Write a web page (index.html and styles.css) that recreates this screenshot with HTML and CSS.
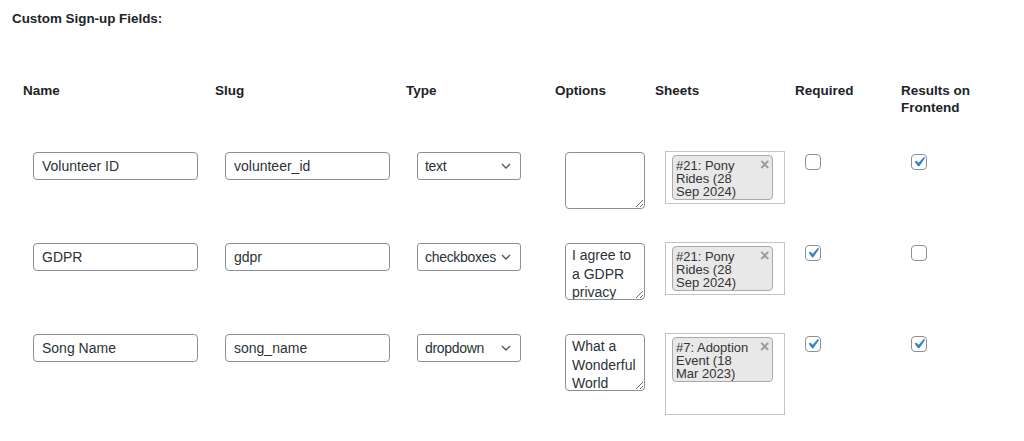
FILE: index.html
```html
<!DOCTYPE html>
<html lang="en">
<head>
<meta charset="utf-8">
<title>Custom Sign-up Fields</title>
<link rel="stylesheet" href="styles.css">
</head>
<body>
<h2 class="title">Custom Sign-up Fields:</h2>
<div class="fields">
  <div class="row head">
    <div>Name</div>
    <div>Slug</div>
    <div>Type</div>
    <div>Options</div>
    <div>Sheets</div>
    <div>Required</div>
    <div>Results on<br>Frontend</div>
  </div>

  <div class="row item">
    <div class="cell"><input class="txt" type="text" value="Volunteer ID"></div>
    <div class="cell"><input class="txt" type="text" value="volunteer_id"></div>
    <div class="cell"><select class="sel"><option>text</option></select></div>
    <div class="cell"><textarea class="opts"></textarea></div>
    <div class="cell">
      <div class="sheets">
        <div class="chip"><span class="chip-text">#21: Pony Rides (28 Sep 2024)</span><span class="chip-x">×</span></div>
      </div>
    </div>
    <div class="cell"><input class="cb" type="checkbox"></div>
    <div class="cell"><input class="cb" type="checkbox" checked></div>
  </div>

  <div class="row item">
    <div class="cell"><input class="txt" type="text" value="GDPR"></div>
    <div class="cell"><input class="txt" type="text" value="gdpr"></div>
    <div class="cell"><select class="sel"><option>checkboxes</option></select></div>
    <div class="cell"><textarea class="opts">I agree to a GDPR privacy policy</textarea></div>
    <div class="cell">
      <div class="sheets">
        <div class="chip"><span class="chip-text">#21: Pony Rides (28 Sep 2024)</span><span class="chip-x">×</span></div>
      </div>
    </div>
    <div class="cell"><input class="cb" type="checkbox" checked></div>
    <div class="cell"><input class="cb" type="checkbox"></div>
  </div>

  <div class="row item">
    <div class="cell"><input class="txt" type="text" value="Song Name"></div>
    <div class="cell"><input class="txt" type="text" value="song_name"></div>
    <div class="cell"><select class="sel"><option>dropdown</option></select></div>
    <div class="cell"><textarea class="opts">What a Wonderful World</textarea></div>
    <div class="cell">
      <div class="sheets tall">
        <div class="chip"><span class="chip-text">#7: Adoption Event (18 Mar 2023)</span><span class="chip-x">×</span></div>
      </div>
    </div>
    <div class="cell"><input class="cb" type="checkbox" checked></div>
    <div class="cell"><input class="cb" type="checkbox" checked></div>
  </div>
</div>
</body>
</html>
```

FILE: styles.css
```css
html, body {
  background: #ffffff;
}
body {
  margin: 0;
  padding: 10px 0 0 12px;
  font-family: "Liberation Sans", Arial, sans-serif;
  color: #1d2327;
}
.title {
  margin: 0;
  font-size: 13.4px;
  line-height: 18px;
  font-weight: bold;
}
.fields {
  margin: 54px 0 0 11px;
}
.row {
  display: grid;
  grid-template-columns: 192px 191px 149px 100px 140px 106px 1fr;
}
.head {
  font-size: 13.5px;
  line-height: 17px;
  font-weight: bold;
  padding-bottom: 35px;
}
.item {
  height: 91px;
  align-items: start;
}
.cell {
  padding-left: 10px;
}
.txt {
  display: block;
  box-sizing: border-box;
  width: 165px;
  height: 28px;
  margin: 1px 0 0;
  padding: 0 8px;
  border: 1px solid #8c8f94;
  border-radius: 4px;
  background: #fff;
  font-family: "Liberation Sans", Arial, sans-serif;
  font-size: 14px;
  color: #2c3338;
  outline: none;
}
.sel {
  display: block;
  box-sizing: border-box;
  width: 104px;
  height: 28px;
  margin: 1px 0 0 1px;
  padding: 0 12px 0 7px;
  border: 1px solid #8c8f94;
  border-radius: 3px;
  font-family: "Liberation Sans", Arial, sans-serif;
  font-size: 14px;
  letter-spacing: -0.3px;
  color: #2c3338;
  -webkit-appearance: none;
  appearance: none;
  background: #fff url("data:image/svg+xml;charset=utf-8,%3Csvg xmlns='http://www.w3.org/2000/svg' width='10' height='6' viewBox='0 0 10 6'%3E%3Cpath d='M1 1l4 4 4-4' fill='none' stroke='%2350575e' stroke-width='1.4'/%3E%3C/svg%3E") no-repeat right 9px center / 10px 6px;
}
.opts {
  display: block;
  box-sizing: border-box;
  width: 80px;
  height: 57px;
  margin: 1px 0 0;
  padding: 2px 6px;
  border: 1px solid #8c8f94;
  border-radius: 4px;
  background: #fff;
  font-family: "Liberation Sans", Arial, sans-serif;
  font-size: 14px;
  line-height: 18.7px;
  color: #2c3338;
  overflow: hidden;
  resize: vertical;
  outline: none;
}
.sheets {
  box-sizing: border-box;
  width: 120px;
  height: 53px;
  padding: 3px 0 0 6px;
  border: 1px solid #c3c3c3;
  background: #fff;
}
.sheets.tall {
  height: 82px;
}
.chip {
  box-sizing: border-box;
  display: flex;
  align-items: flex-start;
  width: 101px;
  height: 45px;
  padding: 3px 0 2px 3px;
  border: 1px solid #aaaaaa;
  border-radius: 4px;
  background: #e8e8e8;
  font-family: "Liberation Sans", Arial, sans-serif;
  font-size: 13px;
  line-height: 13px;
  color: #333;
}
.chip-text {
  width: 78px;
  flex: none;
}
.chip-x {
  margin: -1px 0 0 6px;
  font-size: 16px;
  font-weight: bold;
  line-height: 13px;
  color: #999;
}
.cb {
  display: block;
  box-sizing: border-box;
  width: 16px;
  height: 16px;
  margin: 3px 0 0;
  border: 1px solid #8c8f94;
  border-radius: 4px;
  background: #fff;
  -webkit-appearance: none;
  appearance: none;
}
.cb:checked {
  background: #fff url("data:image/svg+xml;charset=utf-8,%3Csvg xmlns='http://www.w3.org/2000/svg' viewBox='0 0 20 20'%3E%3Cpath d='M14.83 4.89l1.34.94-5.81 8.38H9.02L5.78 9.67l1.34-1.25 2.57 2.4z' fill='%233582c4'/%3E%3C/svg%3E") no-repeat center / 20px 20px;
}
```
